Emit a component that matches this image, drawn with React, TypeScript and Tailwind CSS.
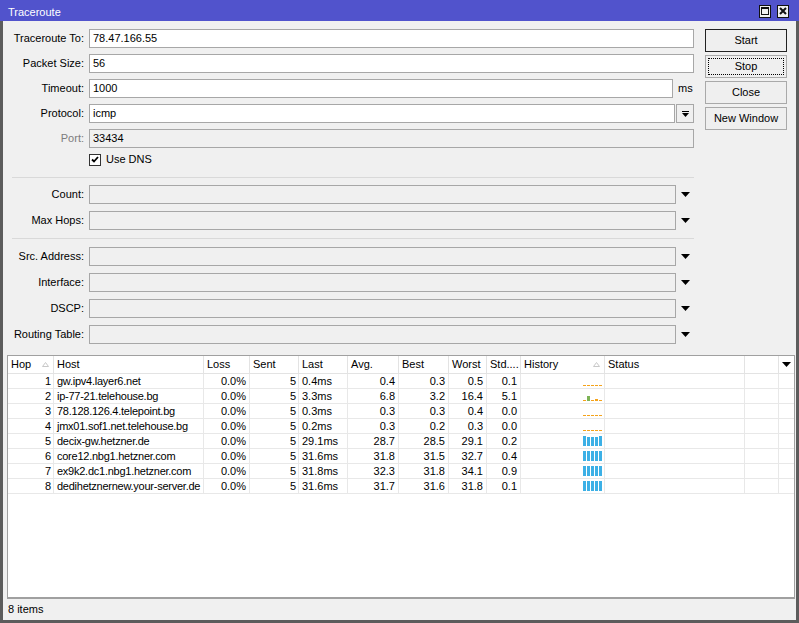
import React from "react";
import clsx from "clsx";

type Hist = { c: string }[];

const dash = "bg-[#f5a31a] h-px";
const blue = "bg-[#3cb0e6]";

const flat: Hist = [0, 1, 2, 3, 4].map(() => ({ c: dash }));
const full: Hist = [0, 1, 2, 3, 4].map(() => ({ c: blue + " h-[10px]" }));

const rows = [
  { hop: "1", host: "gw.ipv4.layer6.net", loss: "0.0%", sent: "5", last: "0.4ms", avg: "0.4", best: "0.3", worst: "0.5", std: "0.1", hist: flat },
  {
    hop: "2", host: "ip-77-21.telehouse.bg", loss: "0.0%", sent: "5", last: "3.3ms", avg: "6.8", best: "3.2", worst: "16.4", std: "5.1",
    hist: [{ c: dash }, { c: "bg-[#7db356] h-[5px]" }, { c: dash }, { c: "bg-[#f5a31a] h-[2px]" }, { c: dash }],
  },
  { hop: "3", host: "78.128.126.4.telepoint.bg", loss: "0.0%", sent: "5", last: "0.3ms", avg: "0.3", best: "0.3", worst: "0.4", std: "0.0", hist: flat },
  { hop: "4", host: "jmx01.sof1.net.telehouse.bg", loss: "0.0%", sent: "5", last: "0.2ms", avg: "0.3", best: "0.2", worst: "0.3", std: "0.0", hist: flat },
  {
    hop: "5", host: "decix-gw.hetzner.de", loss: "0.0%", sent: "5", last: "29.1ms", avg: "28.7", best: "28.5", worst: "29.1", std: "0.2",
    hist: [{ c: blue + " h-[10px]" }, { c: blue + " h-[9px]" }, { c: blue + " h-[9px]" }, { c: blue + " h-[9px]" }, { c: blue + " h-[10px]" }],
  },
  { hop: "6", host: "core12.nbg1.hetzner.com", loss: "0.0%", sent: "5", last: "31.6ms", avg: "31.8", best: "31.5", worst: "32.7", std: "0.4", hist: full },
  { hop: "7", host: "ex9k2.dc1.nbg1.hetzner.com", loss: "0.0%", sent: "5", last: "31.8ms", avg: "32.3", best: "31.8", worst: "34.1", std: "0.9", hist: full },
  { hop: "8", host: "dedihetznernew.your-server.de", loss: "0.0%", sent: "5", last: "31.6ms", avg: "31.7", best: "31.6", worst: "31.8", std: "0.1", hist: full },
];

const cols = [
  { key: "hop", label: "Hop", w: "w-[46px]", cell: "justify-end pr-[2px]", sort: true },
  { key: "host", label: "Host", w: "w-[150px]", cell: "pl-[3px] tracking-[-0.25px]" },
  { key: "loss", label: "Loss", w: "w-[46px]", cell: "justify-end pr-[3px]" },
  { key: "sent", label: "Sent", w: "w-[49px]", cell: "justify-end pr-[2px]" },
  { key: "last", label: "Last", w: "w-[49px]", cell: "pl-[3px]" },
  { key: "avg", label: "Avg.", w: "w-[51px]", cell: "justify-end pr-[3px]" },
  { key: "best", label: "Best", w: "w-[50px]", cell: "justify-end pr-[3px]" },
  { key: "worst", label: "Worst", w: "w-[38px]", cell: "justify-end pr-[3px]" },
  { key: "std", label: "Std....", w: "w-[34px]", cell: "justify-end pr-[3px]" },
  { key: "hist", label: "History", w: "w-[84px]", cell: "justify-end items-end pr-[2px] pb-[2px]", sort: true },
  { key: "status", label: "Status", w: "w-[140px]", cell: "" },
  { key: "x", label: "", w: "w-[34px]", cell: "" },
];

function SortArrow() {
  return (
    <svg width="7" height="5" viewBox="0 0 7 5" className="shrink-0">
      <polygon points="3.5,0.5 6.5,4.5 0.5,4.5" fill="none" stroke="#c8c8c8" strokeWidth="1" />
    </svg>
  );
}

function DownArrow() {
  return (
    <svg width="9" height="5" viewBox="0 0 9 5">
      <polygon points="0,0 9,0 4.5,5" fill="#000" />
    </svg>
  );
}

function Input({ value, disabled, className }: { value?: string; disabled?: boolean; className?: string }) {
  return (
    <div
      className={clsx(
        "flex h-[19px] items-center border border-[#a7a7a7] pl-[3px]",
        disabled ? "bg-[#f0f0f0]" : "bg-white",
        className,
      )}
    >
      {value}
    </div>
  );
}

function Row({ label, disabled, children }: { label: string; disabled?: boolean; children: React.ReactNode }) {
  return (
    <div className="flex h-[19px] items-center">
      <div className={clsx("w-[81px] shrink-0 text-right", disabled && "text-[#7d7d7d]")}>{label}</div>
      <div className="ml-[5px] flex w-[605px] items-center">{children}</div>
    </div>
  );
}

function Combo({ label }: { label: string }) {
  return (
    <Row label={label}>
      <Input disabled className="w-[587px]" />
      <div className="flex w-[18px] justify-center">
        <DownArrow />
      </div>
    </Row>
  );
}

function Button({ children, variant }: { children: React.ReactNode; variant?: "default" | "focus" }) {
  return (
    <div
      className={clsx(
        "relative flex h-[23px] w-[82px] items-center justify-center border bg-[#efefef]",
        variant === "default" ? "border-[#222]" : "border-[#a9a9a9]",
      )}
    >
      {variant === "focus" && <div className="absolute inset-[2px] border border-dotted border-black" />}
      {children}
    </div>
  );
}

function TitleBar() {
  return (
    <div className="flex h-[21px] shrink-0 items-center bg-[#5153cc] pl-[8px] pr-[10px] text-white">
      <span className="pt-[3px]">Traceroute</span>
      <div className="ml-auto flex gap-[6px] pt-px">
        <div className="flex h-[13px] w-[12px] items-center justify-center border border-[#111] bg-[#f0f0f0]">
          <div className="h-[8px] w-[8px] border border-t-2 border-[#111]" />
        </div>
        <div className="flex h-[13px] w-[12px] items-center justify-center border border-[#111] bg-[#f0f0f0]">
          <svg width="8" height="8" viewBox="0 0 8 8">
            <path d="M1 1L7 7M7 1L1 7" stroke="#111" strokeWidth="2" />
          </svg>
        </div>
      </div>
    </div>
  );
}

function History({ hist }: { hist: Hist }) {
  return (
    <div className="flex items-end gap-[1px]">
      {hist.map((b, i) => (
        <span key={i} className={clsx("block w-[3px]", b.c)} />
      ))}
    </div>
  );
}

export default function App() {
  return (
    <div className="flex h-[623px] w-[799px] flex-col font-['Liberation_Sans',Arial,sans-serif] text-[11px] leading-none text-black">
      <TitleBar />
      <div className="flex min-h-0 flex-1 flex-col border-x-[3px] border-b-[3px] border-[#5c5c5c] bg-[#f0f0f0]">
        <div className="flex">
          <div className="flex flex-col pt-[8px]">
            <div className="flex flex-col gap-[6px]">
              <Row label="Traceroute To:">
                <Input value="78.47.166.55" className="w-[605px]" />
              </Row>
              <Row label="Packet Size:">
                <Input value="56" className="w-[605px]" />
              </Row>
              <Row label="Timeout:">
                <Input value="1000" className="w-[584px]" />
                <span className="ml-[5px]">ms</span>
              </Row>
              <Row label="Protocol:">
                <Input value="icmp" className="w-[586px]" />
                <div className="ml-px flex h-[19px] w-[18px] items-center justify-center border border-[#a7a7a7] bg-[#f0f0f0]">
                  <svg width="7" height="6" viewBox="0 0 7 6">
                    <rect x="0" y="0" width="7" height="1" fill="#000" />
                    <polygon points="0,2 7,2 3.5,6" fill="#000" />
                  </svg>
                </div>
              </Row>
              <Row label="Port:" disabled>
                <Input value="33434" disabled className="w-[605px]" />
              </Row>
            </div>
            <div className="ml-[86px] mt-[5px] flex h-[13px] items-center">
              <div className="flex h-[12px] w-[12px] items-center justify-center border border-[#333] bg-white">
                <svg width="8" height="7" viewBox="0 0 8 7">
                  <path d="M1 3.5L3 5.5L7 1" stroke="#000" strokeWidth="1.8" fill="none" />
                </svg>
              </div>
              <span className="ml-[5px]">Use DNS</span>
            </div>
            <div className="ml-[9px] mt-[11px] h-px w-[682px] bg-[#d9d9d9]" />
            <div className="mt-[7px] flex flex-col gap-[7px]">
              <Combo label="Count:" />
              <Combo label="Max Hops:" />
            </div>
            <div className="ml-[9px] mt-[8px] h-px w-[682px] bg-[#d9d9d9]" />
            <div className="mt-[8px] flex flex-col gap-[7px]">
              <Combo label="Src. Address:" />
              <Combo label="Interface:" />
              <Combo label="DSCP:" />
              <Combo label="Routing Table:" />
            </div>
          </div>
          <div className="ml-[11px] flex flex-col gap-[3px] pt-[8px]">
            <Button variant="default">Start</Button>
            <Button variant="focus">Stop</Button>
            <Button>Close</Button>
            <Button>New Window</Button>
          </div>
        </div>

        <div className="ml-[4px] mr-[1px] mt-[11px] flex min-h-0 flex-1 flex-col border border-b-2 border-[#a0a0a0] bg-white">
          <div className="flex h-[18px] shrink-0 border-b border-[#e3e3e3]">
            {cols.map((c) => (
              <div
                key={c.key}
                className={clsx(c.w, "flex shrink-0 items-center justify-between border-r border-[#e3e3e3] pl-[3px] pr-[4px]")}
              >
                <span>{c.label}</span>
                {c.sort && <SortArrow />}
              </div>
            ))}
            <div className="flex flex-1 items-center justify-center">
              <DownArrow />
            </div>
          </div>
          {rows.map((r) => (
            <div key={r.hop} className="flex h-[15px] shrink-0 border-b border-[#e8e8e8]">
              {cols.map((c) => (
                <div
                  key={c.key}
                  className={clsx(c.w, "flex shrink-0 items-center overflow-hidden whitespace-nowrap border-r border-[#e8e8e8]", c.cell)}
                >
                  {c.key === "hist" ? (
                    <History hist={r.hist} />
                  ) : c.key === "status" || c.key === "x" ? null : (
                    (r as unknown as Record<string, string>)[c.key]
                  )}
                </div>
              ))}
              <div className="flex-1" />
            </div>
          ))}
        </div>

        <div className="flex h-[21px] shrink-0 items-center pl-[5px]">8 items</div>
      </div>
    </div>
  );
}
